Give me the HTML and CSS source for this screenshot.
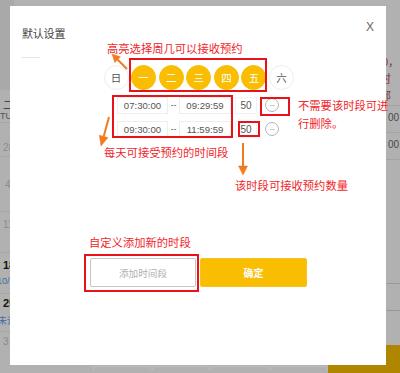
FILE: index.html
```html
<!DOCTYPE html>
<html lang="zh-CN">
<head>
<meta charset="utf-8">
<title>默认设置</title>
<link rel="stylesheet" href="styles.css">
</head>
<body>
<div class="page">
  <div class="bg-top">
    <div class="bg-left">
      <div class="lh"></div>
      <div class="cell week"><div class="wk">二</div><div class="tu">TU</div></div>
      <div class="cell c1"><span class="dim">28</span></div>
      <div class="cell c2"><span class="dim">4</span></div>
      <div class="cell c3"><span class="dim">11</span></div>
      <div class="cell c4"><div class="bold">18</div><div class="blue">10/</div></div>
      <div class="cell c5"><div class="bold">25</div><div class="blue zh">未设</div></div>
      <div class="cell c6"><span class="dim">3</span></div>
    </div>
    <div class="bg-mid"></div>
    <div class="bg-right">
      <div class="rt r1">0，</div>
      <div class="rt r2">时</div>
      <div class="rt r3">部</div>
      <div class="rrow">00</div>
      <div class="rrow">00</div>
      <div class="rgap"></div>
      <div class="rline"></div>
    </div>
  </div>
  <div class="bg-foot">
    <div class="foot-left">
      <span class="ft"></span><span class="ft"></span><span class="ft"></span><span class="ft"></span>
    </div>
    <div class="foot-gold"></div>
  </div>
</div>

<div class="modal">
  <div class="modal-head">
    <div class="title-block">
      <div class="title">默认设置</div>
      <div class="title-line"></div>
    </div>
    <div class="close">X</div>
  </div>

  <div class="days">
    <span class="day">日</span>
    <span class="day on">一</span>
    <span class="day on">二</span>
    <span class="day on">三</span>
    <span class="day on">四</span>
    <span class="day on">五</span>
    <span class="day">六</span>
  </div>

  <div class="times">
    <div class="trow">
      <span class="tbox">07:30:00</span>
      <span class="sep">--</span>
      <span class="tbox wide">09:29:59</span>
      <span class="count">50</span>
      <span class="minus"><i></i></span>
    </div>
    <div class="trow">
      <span class="tbox">09:30:00</span>
      <span class="sep">--</span>
      <span class="tbox wide">11:59:59</span>
      <span class="count">50</span>
      <span class="minus"><i></i></span>
    </div>
  </div>

  <div class="actions">
    <button class="btn-add">添加时间段</button>
    <button class="btn-ok">确定</button>
  </div>
</div>

<div class="notes">
  <div class="note n-days">高亮选择周几可以接收预约</div>
  <div class="note n-times">每天可接受预约的时间段</div>
  <div class="note n-del">不需要该时段可进<br>行删除。</div>
  <div class="note n-count">该时段可接收预约数量</div>
  <div class="note n-add">自定义添加新的时段</div>

  <div class="rbox b-days"></div>
  <div class="rbox b-times"></div>
  <div class="rbox b-minus"></div>
  <div class="rbox b-count"></div>
  <div class="rbox b-add"></div>

  <svg class="arrows" width="400" height="373" viewBox="0 0 400 373">
    <g fill="#f27b1f" stroke="#f27b1f">
      <line x1="127" y1="69" x2="117.5" y2="59.5" stroke-width="2"/>
      <polygon points="112,54 120.5,56.8 114.8,62.5" stroke-width="0.5"/>
      <line x1="109" y1="117" x2="103.7" y2="136.4" stroke-width="2"/>
      <polygon points="101,146 108,137.6 99.3,135.2" stroke-width="0.5"/>
      <line x1="243" y1="143" x2="243" y2="166" stroke-width="2"/>
      <polygon points="238.5,166 247.5,166 243,175" stroke-width="0.5"/>
    </g>
  </svg>
</div>
</body>
</html>
```

FILE: styles.css
```css
* { box-sizing: border-box; }

html, body {
  margin: 0;
  padding: 0;
}

body {
  width: 400px;
  height: 373px;
  overflow: hidden;
  position: relative;
  background: #b1b1b1;
  font-family: "Liberation Sans", "Noto Sans CJK SC", sans-serif;
}

/* ---------- dimmed background page ---------- */
.page {
  display: flex;
  flex-direction: column;
  height: 373px;
}

.bg-top {
  display: flex;
  height: 345px;
}

.bg-left {
  width: 14px;
  overflow: hidden;
  display: flex;
  flex-direction: column;
  font-size: 10px;
  line-height: 12px;
  white-space: nowrap;
}

.lh {
  height: 90px;
  background: #a9a9a9;
  flex: none;
}

.cell {
  flex: none;
  border-bottom: 1px solid #a6a6a6;
  padding-left: 3px;
}

.week { height: 33px; padding-top: 10px; }
.week .wk { font-size: 11px; line-height: 11px; color: #444; }
.week .tu { font-size: 9px; line-height: 10px; color: #555; margin-left: -3px; }

.c1 { height: 34px; padding-top: 19px; }
.c2 { height: 55px; padding-top: 22px; padding-left: 5px; }
.c3 { height: 41px; padding-top: 7px; }
.c4 { height: 41px; padding-top: 6px; }
.c5 { height: 38px; padding-top: 3px; }
.c6 { height: 13px; padding-top: 4px; border-bottom: none; }

.dim { color: #8c8c8c; }
.bold { font-weight: bold; color: #111; font-size: 11px; }
.blue { color: #3f6f9e; margin-top: 4px; margin-left: -6px; font-size: 9px; }
.blue.zh { margin-top: 6px; margin-left: -5px; }

.bg-mid { flex: 1; }

.bg-right {
  width: 16px;
  overflow: hidden;
  display: flex;
  flex-direction: column;
  white-space: nowrap;
  padding-top: 54px;
}

.rt {
  font-size: 11px;
  line-height: 17px;
  color: #7d3a3a;
  margin-left: -2px;
}

.r2, .r3 { margin-left: -4px; }

.rrow {
  height: 27px;
  border-top: 1px solid #a4a4a4;
  font-size: 10px;
  line-height: 24px;
  color: #4a4a4a;
  padding-left: 4px;
}

.rrow + .rrow { border-bottom: 1px solid #a4a4a4; height: 28px; }

.rgap { height: 123px; }

.rline {
  height: 28px;
  border-top: 1px solid #999;
  border-bottom: 1px solid #999;
}

.bg-foot {
  display: flex;
  height: 28px;
}

.foot-left {
  flex: 1;
  display: flex;
  gap: 1px;
  padding: 21px 0 0 93px;
}

.ft {
  width: 58px;
  height: 4px;
  border: 1px solid #bdbdbd;
  border-bottom: none;
}

.foot-gold {
  width: 82px;
  background: #ae8600;
}

/* ---------- modal ---------- */
.modal {
  position: absolute;
  left: 10px;
  top: 6px;
  width: 376px;
  height: 359px;
  background: #fff;
  display: flex;
  flex-direction: column;
}

.modal-head {
  display: flex;
  justify-content: space-between;
  align-items: flex-start;
  height: 52px;
  padding: 0 12px;
}

.title-block {
  padding-top: 21px;
}

.title {
  font-size: 11px;
  line-height: 14px;
  color: #444;
  letter-spacing: -0.2px;
}

.title-line {
  width: 18px;
  height: 1px;
  background: #e3e3e3;
  margin-top: 16px;
}

.close {
  padding-top: 14px;
  font-size: 12px;
  line-height: 14px;
  color: #666;
}

.days {
  display: flex;
  gap: 2.6px;
  margin: 6.5px 0 0 93.5px;
}

.day {
  width: 25px;
  height: 25px;
  border-radius: 50%;
  display: flex;
  align-items: center;
  justify-content: center;
  font-size: 10.5px;
  color: #555;
  background: #fff;
  border: 1px solid #eeeeee;
}

.day.on {
  background: #f9bd01;
  border-color: #f9bd01;
  color: #fff;
}

.times {
  display: flex;
  flex-direction: column;
  gap: 8px;
  margin: 7.5px 0 0 107px;
}

.trow {
  display: flex;
  align-items: center;
  height: 16px;
}

.tbox {
  width: 51px;
  height: 17px;
  border: 1px solid #eeeeee;
  font-size: 9.6px;
  line-height: 15px;
  color: #555;
  text-align: center;
}

.tbox.wide { width: 52px; }

.sep {
  width: 11px;
  text-align: center;
  font-size: 9px;
  color: #666;
}

.count {
  width: 22px;
  height: 17px;
  margin-left: 4px;
  border: 1px solid #f2f2f2;
  font-size: 10px;
  line-height: 15px;
  color: #555;
  text-align: center;
}

.minus {
  width: 14px;
  height: 14px;
  margin-left: 8px;
  border-radius: 50%;
  border: 1.3px solid #b5b5b5;
  display: flex;
  align-items: center;
  justify-content: center;
}

.minus i {
  width: 5px;
  height: 1px;
  background: #c8c8c8;
}

.actions {
  display: flex;
  gap: 4px;
  margin: 121px 0 0 80px;
}

.actions button {
  height: 29px;
  border-radius: 2px;
  font-family: "Liberation Sans", "Noto Sans CJK SC", sans-serif;
  padding: 0;
  cursor: pointer;
}

.btn-add {
  width: 106px;
  background: #fff;
  border: 1px solid #c6c6c6;
  color: #b0b0b0;
  font-size: 9.6px;
}

.btn-ok {
  width: 107px;
  background: #f9bd01;
  border: 1px solid #f9c21a;
  color: #fff;
  font-size: 10px;
  font-weight: bold;
}

/* ---------- annotations ---------- */
.notes {
  position: absolute;
  left: 0;
  top: 0;
  width: 400px;
  height: 373px;
  pointer-events: none;
}

.note {
  position: absolute;
  font-size: 11.3px;
  line-height: 18px;
  color: #f0262b;
  white-space: nowrap;
}

.n-days { left: 107px; top: 40px; }
.n-times { left: 104px; top: 144px; }
.n-del { left: 298px; top: 97px; }
.n-count { left: 235px; top: 177px; }
.n-add { left: 89px; top: 234px; }

.rbox {
  position: absolute;
  border: 2px solid #e8121b;
}

.b-days { left: 129px; top: 58px; width: 138px; height: 34px; }
.b-times { left: 112px; top: 95px; width: 121px; height: 43px; }
.b-minus { left: 260px; top: 97px; width: 30px; height: 19px; }
.b-count { left: 238px; top: 121px; width: 22px; height: 16px; }
.b-add { left: 84px; top: 254px; width: 115px; height: 38px; }

.arrows {
  position: absolute;
  left: 0;
  top: 0;
}
```
